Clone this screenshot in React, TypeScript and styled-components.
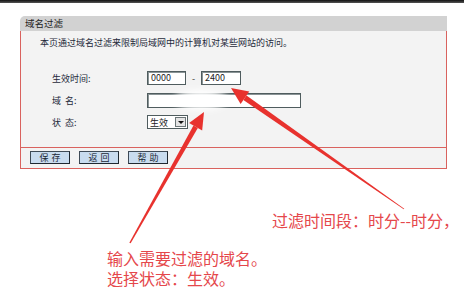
import React from "react";
import styled, { createGlobalStyle } from "styled-components";

const GlobalStyle = createGlobalStyle`
  html, body {
    margin: 0;
    padding: 0;
    background: #ffffff;
  }
  body {
    font-family: "Noto Sans CJK SC", "Liberation Sans", sans-serif;
  }
`;

const Page = styled.div`
  position: relative;
  width: 464px;
  height: 294px;
  overflow: hidden;
  background: #ffffff;
`;

const TopRule = styled.div`
  height: 3px;
  background: linear-gradient(#111111, #555555);
`;

const Panel = styled.div`
  width: 427px;
  margin: 13px 0 0 20px;
`;

const PanelHeader = styled.div`
  height: 15px;
  line-height: 15px;
  padding-left: 5px;
  background: #d2d2d2;
  border-top-left-radius: 5px;
  font-size: 9.5px;
  color: #222222;
`;

const PanelBody = styled.div`
  background: #f3f3f3;
  border-left: 1px solid #d9625e;
  border-right: 1px solid #d9625e;
  padding: 7px 0 18px 19px;
`;

const Intro = styled.div`
  font-size: 9px;
  line-height: 10px;
  color: #1e2a3a;
`;

const Form = styled.div`
  display: flex;
  flex-direction: column;
  gap: 8px;
  margin: 23px 0 0 12px;
`;

const Row = styled.div`
  display: flex;
  align-items: center;
  height: 14px;
`;

const Label = styled.div`
  width: 95px;
  font-size: 9px;
  color: #1e2a3a;
  white-space: pre;
`;

const TextBox = styled.div<{ $w: number; $h?: number }>`
  box-sizing: border-box;
  width: ${(p) => p.$w}px;
  height: ${(p) => p.$h ?? 14}px;
  border: 1px solid #4f5c5e;
  box-shadow: inset 1px 1px 0 #8a9496;
  background: #ffffff;
  font-size: 9px;
  line-height: 12px;
  padding-left: 3px;
  color: #222222;
`;

const Dash = styled.span`
  width: 15px;
  text-align: center;
  font-size: 9px;
  color: #333333;
`;

const Select = styled.div`
  box-sizing: border-box;
  display: flex;
  align-items: center;
  width: 41px;
  height: 14px;
  border: 1px solid #4f5c5e;
  background: #ffffff;
  font-size: 9px;
  color: #222222;
  padding-left: 2px;
`;

const SelectText = styled.span`
  flex: 1;
`;

const SelectArrow = styled.span`
  box-sizing: border-box;
  width: 11px;
  height: 10px;
  margin-right: 1px;
  border: 1px solid #6b7577;
  background: #e4e4e4;
  display: flex;
  align-items: center;
  justify-content: center;

  &::after {
    content: "";
    border-left: 3px solid transparent;
    border-right: 3px solid transparent;
    border-top: 3px solid #111111;
  }
`;

const Footer = styled.div`
  display: flex;
  gap: 9px;
  background: #f3f3f3;
  border: 1px solid #d9625e;
  padding: 3px 0 4px 9px;
`;

const Button = styled.div`
  box-sizing: border-box;
  width: 40px;
  height: 13px;
  border: 1px solid #3e4a56;
  border-right-color: #1f2830;
  border-bottom-color: #1f2830;
  background: #c9dcef;
  font-size: 9px;
  line-height: 11px;
  text-align: center;
  letter-spacing: 3px;
  padding-left: 3px;
  color: #1c2836;
`;

const Overlay = styled.svg`
  position: absolute;
  inset: 0;
  pointer-events: none;
`;

const Note = styled.div<{ $x: number; $y: number }>`
  position: absolute;
  left: ${(p) => p.$x}px;
  top: ${(p) => p.$y}px;
  font-size: 16px;
  line-height: 18px;
  color: #e5474b;
  white-space: nowrap;
`;

type Pt = [number, number];

// tapered red arrow: thin tail, wider shaft near a triangular head
const arrowPoints = (tail: Pt, tip: Pt, tailW: number, headW: number) => {
  const dx = tip[0] - tail[0];
  const dy = tip[1] - tail[1];
  const len = Math.hypot(dx, dy);
  const ux = dx / len;
  const uy = dy / len;
  const nx = -uy;
  const ny = ux;
  const headLen = 17;
  const bx = tip[0] - ux * headLen;
  const by = tip[1] - uy * headLen;
  const shaft = [
    [tail[0] + nx * tailW / 2, tail[1] + ny * tailW / 2],
    [bx + nx * headW / 2, by + ny * headW / 2],
    [bx - nx * headW / 2, by - ny * headW / 2],
    [tail[0] - nx * tailW / 2, tail[1] - ny * tailW / 2],
  ];
  const head = [
    [tip[0], tip[1]],
    [bx + nx * 7.5, by + ny * 7.5],
    [bx - nx * 7.5, by - ny * 7.5],
  ];
  const fmt = (ps: number[][]) => ps.map((p) => p.join(",")).join(" ");
  return { shaft: fmt(shaft), head: fmt(head) };
};

const Arrow = ({ tail, tip, tailW, headW }: { tail: Pt; tip: Pt; tailW: number; headW: number }) => {
  const a = arrowPoints(tail, tip, tailW, headW);
  return (
    <g fill="#e8322e">
      <polygon points={a.shaft} />
      <polygon points={a.head} />
    </g>
  );
};

export default function App() {
  return (
    <Page>
      <GlobalStyle />
      <TopRule />
      <Panel>
        <PanelHeader>域名过滤</PanelHeader>
        <PanelBody>
          <Intro>本页通过域名过滤来限制局域网中的计算机对某些网站的访问。</Intro>
          <Form>
            <Row>
              <Label>生效时间:</Label>
              <TextBox $w={39}>0000</TextBox>
              <Dash>-</Dash>
              <TextBox $w={40}>2400</TextBox>
            </Row>
            <Row>
              <Label>{"域  名:"}</Label>
              <TextBox $w={154} $h={15} />
            </Row>
            <Row>
              <Label>{"状  态:"}</Label>
              <Select>
                <SelectText>生效</SelectText>
                <SelectArrow />
              </Select>
            </Row>
          </Form>
        </PanelBody>
        <Footer>
          <Button>保存</Button>
          <Button>返回</Button>
          <Button>帮助</Button>
        </Footer>
      </Panel>

      <Overlay width="464" height="294" viewBox="0 0 464 294">
        <defs>
          <filter id="smudge" x="-50%" y="-50%" width="200%" height="200%">
            <feGaussianBlur stdDeviation="3" />
          </filter>
        </defs>
        <ellipse cx="201" cy="100" rx="27" ry="10" fill="#ffffff" filter="url(#smudge)" />
        <Arrow tail={[130, 243]} tip={[204, 112]} tailW={1.5} headW={5} />
        <Arrow tail={[404, 209]} tip={[231, 88]} tailW={0.8} headW={5.5} />
      </Overlay>

      <Note $x={272} $y={211}>过滤时间段：时分--时分，</Note>
      <Note $x={107} $y={249}>输入需要过滤的域名。</Note>
      <Note $x={107} $y={269}>选择状态：生效。</Note>
    </Page>
  );
}
